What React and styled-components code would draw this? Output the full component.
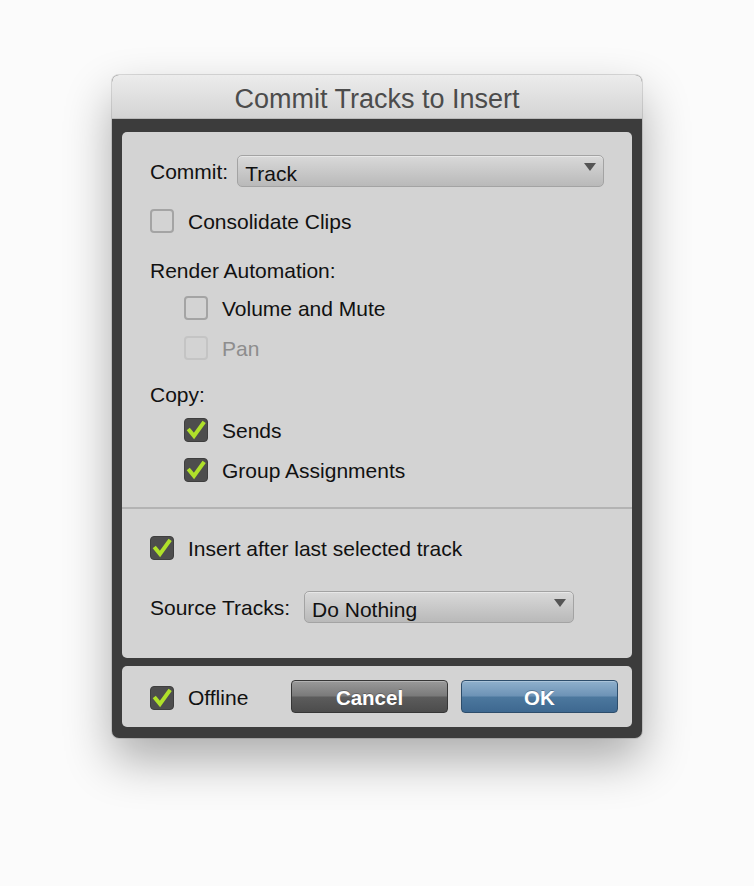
import React from 'react'
import styled, { createGlobalStyle } from 'styled-components'

const Global = createGlobalStyle`
  html, body {
    margin: 0;
    padding: 0;
    background: #ffffff;
  }
  body {
    font-family: "Liberation Sans", Arial, sans-serif;
    -webkit-font-smoothing: antialiased;
  }
`

const Page = styled.div`
  width: 754px;
  height: 886px;
  padding: 75px 0 0 112px;
  box-sizing: border-box;
  background: #fbfbfb;
`

const Window = styled.div`
  width: 530px;
  height: 663px;
  border-radius: 7px;
  background: #3c3c3c;
  box-shadow: 0 22px 48px rgba(0,0,0,0.32), 0 0 0 1px rgba(0,0,0,0.12);
  display: flex;
  flex-direction: column;
  overflow: hidden;
`

const TitleBar = styled.div`
  height: 44px;
  background: linear-gradient(#ececec, #d4d4d4);
  border-bottom: 1px solid #b9b9b9;
  display: flex;
  align-items: center;
  justify-content: center;
  color: #4c4c4c;
  font-size: 27px;
  padding-top: 5px;
  box-sizing: border-box;
`

const Frame = styled.div`
  flex: 1;
  padding: 13px 10px 11px;
  display: flex;
  flex-direction: column;
  gap: 8px;
`

const Panel = styled.div`
  background: #d3d3d3;
  border-radius: 5px;
  display: flex;
  flex-direction: column;
`

const Main = styled(Panel)`
  height: 526px;
`

const Section = styled.div`
  padding: ${p => p.$pad};
  display: flex;
  flex-direction: column;
  border-bottom: ${p => p.$divider ? '2px solid #b3b3b3' : 'none'};
`

const Row = styled.div`
  display: flex;
  align-items: center;
  height: ${p => p.$h || 24}px;
  margin-top: ${p => p.$mt || 0}px;
  padding-left: ${p => p.$indent || 0}px;
  font-size: 21px;
  color: ${p => p.$disabled ? '#8d8d8d' : '#111'};
`

const Label = styled.span`
  margin-left: ${p => p.$ml || 0}px;
  padding-top: 2px;
  white-space: nowrap;
  font-size: 21px;
  color: inherit;
`

const Box = styled.span`
  width: 24px;
  height: 24px;
  box-sizing: border-box;
  border-radius: 4px;
  flex: none;
  display: flex;
  align-items: center;
  justify-content: center;
  margin-top: ${p => p.$mt || 0}px;
  border: ${p => p.$checked ? '1px solid #3e3e3e' : p.$disabled ? '2px solid #c4c4c4' : '2px solid #a4a4a4'};
  background: ${p => p.$checked ? '#4d4d4d' : 'transparent'};
`

const Select = styled.div`
  position: relative;
  width: ${p => p.$w}px;
  height: 32px;
  margin-left: ${p => p.$ml}px;
  box-sizing: border-box;
  border: 1px solid #a3a3a3;
  border-radius: 5px;
  background: linear-gradient(#d9d9d9, #b9b9b9);
  box-shadow: inset 0 1px 0 rgba(255,255,255,0.4);
  display: flex;
  align-items: center;
  padding: 5px 0 0 7px;
  font-size: 21px;
  color: #111;
`

const Arrow = styled.span`
  position: absolute;
  right: 7px;
  top: 7px;
  width: 0;
  height: 0;
  border-left: 6px solid transparent;
  border-right: 6px solid transparent;
  border-top: 8px solid #555;
`

const Footer = styled(Panel)`
  flex-direction: row;
  align-items: center;
  height: 61px;
  padding: 0 14px 0 28px;
  color: #111;
`

const Button = styled.div`
  width: ${p => p.$w}px;
  height: 33px;
  margin-left: ${p => p.$ml}px;
  box-sizing: border-box;
  border-radius: 4px;
  display: flex;
  align-items: center;
  justify-content: center;
  color: #fff;
  font-weight: bold;
  font-size: 20.5px;
  padding-top: 2px;
  border: 1px solid ${p => p.$primary ? '#2d4d6b' : '#363636'};
  background: ${p => p.$primary
    ? 'linear-gradient(#8fb0cc 0%, #6d93b6 48%, #4c789e 52%, #3e6890 100%)'
    : 'linear-gradient(#9a9a9a 0%, #7a7a7a 48%, #5c5c5c 52%, #4c4c4c 100%)'};
  box-shadow: inset 0 1px 0 rgba(255,255,255,0.25);
  text-shadow: 0 -1px 0 rgba(0,0,0,0.25);
`

function Check() {
  return (
    <svg width="20" height="20" viewBox="0 0 20 20">
      <path d="M3.5 10.5 L8 16 L17 3.5" fill="none" stroke="#afe02a" strokeWidth="4" strokeLinecap="square" strokeLinejoin="miter" />
    </svg>
  )
}

function CheckRow({ label, checked, disabled, mt, indent }) {
  return (
    <Row $mt={mt} $indent={indent} $disabled={disabled}>
      <Box $checked={checked} $disabled={disabled}>{checked && <Check />}</Box>
      <Label $ml={14}>{label}</Label>
    </Row>
  )
}

export default function App() {
  return (
    <Page>
      <Global />
      <Window>
        <TitleBar>Commit Tracks to Insert</TitleBar>
        <Frame>
          <Main>
            <Section $pad="23px 28px 25px" $divider>
              <Row $h={32}>
                <Label>Commit:</Label>
                <Select $w={367} $ml={9}>Track<Arrow /></Select>
              </Row>
              <CheckRow label="Consolidate Clips" mt={22} />
              <Row $mt={25}><Label>Render Automation:</Label></Row>
              <CheckRow label="Volume and Mute" mt={14} indent={34} />
              <CheckRow label="Pan" mt={16} indent={34} disabled />
              <Row $mt={22}><Label>Copy:</Label></Row>
              <CheckRow label="Sends" mt={12} indent={34} checked />
              <CheckRow label="Group Assignments" mt={16} indent={34} checked />
            </Section>
            <Section $pad="27px 28px 0">
              <CheckRow label="Insert after last selected track" checked />
              <Row $h={32} $mt={31}>
                <Label>Source Tracks:</Label>
                <Select $w={270} $ml={14}>Do Nothing<Arrow /></Select>
              </Row>
            </Section>
          </Main>
          <Footer>
            <Box $checked $mt={3}><Check /></Box>
            <Label $ml={14}>Offline</Label>
            <Button $w={157} $ml={43}>Cancel</Button>
            <Button $w={158} $ml={13} $primary>OK</Button>
          </Footer>
        </Frame>
      </Window>
    </Page>
  )
}
